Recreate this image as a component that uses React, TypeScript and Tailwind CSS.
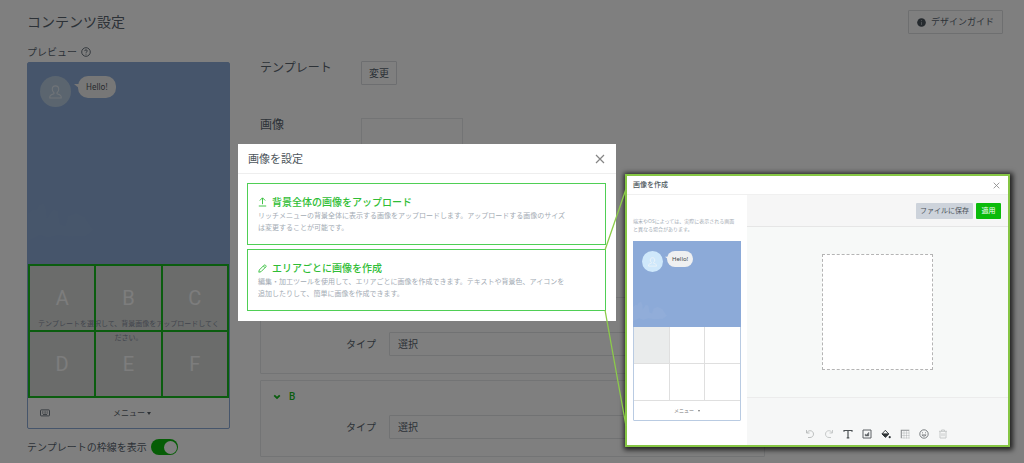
import React from "react";

const FONT = "font-['Noto_Sans','Noto_Sans_CJK_JP',sans-serif]";

function PersonIcon({ className }: { className: string }) {
  return (
    <svg viewBox="0 0 12 13" className={className} fill="none" stroke="currentColor" strokeWidth="1" strokeLinejoin="round" aria-hidden="true">
      <path d="M4.6 7.2C3.5 6.3 3 5.1 3 3.9 3 2 4.3.8 6 .8s3 1.200 3 3.100c0 1.200-.5 2.400-1.600 3.300v.9c1.700.5 3.100 1 3.600 2 .2.500.3 1.200.3 1.900H.7c0-.7.1-1.400.3-1.900.5-1 1.900-1.500 3.600-2z" />
    </svg>
  );
}

function CloudArt({ className }: { className: string }) {
  return (
    <svg viewBox="0 0 70 40" className={className} fill="currentColor" aria-hidden="true">
      <path d="M0 40V12l5-4 3 1 3-5 5-2 2 6 1 9 6-9 5 2 2 13 5 2 3-10 8-3 9 4 5 8 4 5-8 6-16 1-12-2-10 3-8-3z" />
    </svg>
  );
}

function CloseIcon({ className }: { className: string }) {
  return (
    <svg viewBox="0 0 10 10" className={className} fill="none" stroke="currentColor" strokeWidth="1.2" aria-hidden="true">
      <path d="M1 1l8 8M9 1L1 9" />
    </svg>
  );
}

function KeyboardIcon() {
  return (
    <svg viewBox="0 0 10 8" className="h-[8px] w-[10px] text-[#6f7982]" fill="none" stroke="currentColor" aria-hidden="true">
      <rect x=".5" y=".9" width="9" height="6" rx=".6" />
      <path d="M2 2.900h6M2 4.100h6" strokeDasharray="1 .6" strokeWidth=".8" />
      <path d="M3 5.500h4" strokeWidth=".9" />
    </svg>
  );
}

function Preview() {
  return (
    <div className="mt-1 rounded-[2px] border border-[#8caad6]">
      <div className="relative flex h-[201px] items-start gap-[7px] overflow-hidden bg-[#8caad6] pt-[13px] pl-[12px]">
        <CloudArt className="absolute bottom-[23px] left-0 h-[40px] w-[70px] text-[#8eacd7]" />
        <div className="flex size-[31px] items-center justify-center rounded-full bg-[#b6cbdf] text-[#dfe7ef]">
          <PersonIcon className="h-[14px] w-[13px]" />
        </div>
        <div className="relative rounded-[10px] bg-[#eeeeee] px-[8px] text-[8px] leading-[22px] text-[#4e5459]">
          <svg viewBox="0 0 6 6" className="absolute top-[7px] -left-[4px] size-[6px]" fill="#eeeeee" aria-hidden="true">
            <path d="M0 1h6v5z" />
          </svg>
          Hello!
        </div>
      </div>
      <div className="relative bg-[#d6d9d7]">
        <p className="absolute inset-x-0 top-[53px] text-center text-[7px] leading-[14px] text-[#858b9b]">
          テンプレートを選択して、背景画像をアップロードしてく
          <br />
          ださい。
        </p>
        <div className="relative grid grid-cols-3 border border-[#16bb1e]">
          {["A", "B", "C", "D", "E", "F"].map((k) => (
            <div key={k} className="flex h-[66px] items-center justify-center border border-[#16bb1e] font-[Roboto,sans-serif] text-[20px] text-[#fafafa]">
              {k}
            </div>
          ))}
        </div>
      </div>
      <div className="grid h-[30px] grid-cols-3 items-center pl-[12px]">
        <KeyboardIcon />
        <div className="flex items-center gap-[2px] text-[8px] leading-[12px] text-[#5a6168] whitespace-nowrap">
          <span className="pl-[10px]">メニュー</span>
          <span className="border-x-2 border-t-[3px] border-x-transparent border-t-current" />
        </div>
      </div>
    </div>
  );
}

function TypeRow({ id }: { id: string }) {
  return (
    <div className="mt-3 flex items-center gap-[13px] pr-3">
      <label htmlFor={id} className="w-[115px] text-right">
        タイプ
      </label>
      <select id={id} className="h-6 flex-1 appearance-none rounded-[1px] border border-[#e2e4e6] bg-transparent px-2 text-[10px]">
        <option>選択</option>
      </select>
    </div>
  );
}

function AreaCard({ name }: { name: string }) {
  return (
    <section className="rounded-[1px] border border-[#e6e8ea] pt-[10px] pb-[17px] text-[10px] leading-3">
      <h3 className="flex items-center gap-2 pl-3 font-[Roboto,'Noto_Sans_CJK_JP',sans-serif] font-medium text-[#16bb1e]">
        <svg viewBox="0 0 8 6" className="h-[6px] w-[8px]" fill="none" stroke="currentColor" strokeWidth="1.800" aria-hidden="true">
          <path d="M1.200 1.300L4 4l2.800-2.700" />
        </svg>
        {name}
      </h3>
      <TypeRow id={`type-${name}`} />
    </section>
  );
}

function SettingsPage() {
  return (
    <div className="pb-1 text-[#5a656f]">
      <header className="flex items-center justify-between pt-[10px] pr-[21px] pl-[27px]">
        <h1 className="text-[14px] leading-6">コンテンツ設定</h1>
        <button type="button" className="flex h-6 items-center gap-[5px] rounded-[1px] border border-[#dcdee1] px-[8px] text-[9px]">
          <svg viewBox="0 0 10 10" className="size-[9px]" aria-hidden="true">
            <circle cx="5" cy="5" r="4.800" fill="#4b545d" />
            <path d="M5 2.300v1.200M5 4.500v3.200" stroke="#a5abb0" strokeWidth="1" />
          </svg>
          デザインガイド
        </button>
      </header>
      <div className="flex gap-[30px] pl-[27px]">
        <div className="w-[203px] shrink-0 pt-3">
          <h2 className="flex items-center gap-[4px] text-[10px] leading-3">
            プレビュー
            <svg viewBox="0 0 10 10" className="size-[10px]" fill="none" stroke="currentColor" strokeWidth=".9" aria-hidden="true">
              <circle cx="5" cy="5" r="4.300" />
              <path d="M3.700 4.100c0-.8.6-1.300 1.300-1.300s1.300.5 1.300 1.200c0 .9-1.300.9-1.300 1.800M5 6.700v.9" />
            </svg>
          </h2>
          <Preview />
          <label className="mt-[10px] flex h-4 items-center gap-[4px] text-[10px]">
            テンプレートの枠線を表示
            <input type="checkbox" defaultChecked className="peer sr-only" />
            <span className="flex h-4 w-[27px] items-center justify-end rounded-full bg-[#0dbb0d] px-[1px]">
              <span className="size-[13px] rounded-full bg-white" />
            </span>
          </label>
        </div>
        <div className="max-w-[505px] flex-1 pt-[27px]">
          <div className="flex items-start">
            <h2 className="w-[101px] text-[12px] leading-[14px]">テンプレート</h2>
            <button type="button" className="h-6 rounded-[1px] border border-[#dadce0] px-[7px] text-[10px]">
              変更
            </button>
          </div>
          <div className="mt-[33px] flex items-start">
            <h2 className="w-[101px] text-[12px] leading-[14px]">画像</h2>
            <div className="h-[116px] w-[102px] border border-[#e6e8ea]" />
          </div>
          <div className="mt-[63px] flex flex-col gap-[6px]">
            <AreaCard name="A" />
            <AreaCard name="B" />
          </div>
        </div>
      </div>
    </div>
  );
}

function OptionButton({ icon, title, children }: { icon: React.ReactNode; title: string; children: React.ReactNode }) {
  return (
    <button type="button" className="block w-full border border-[#4fcf55] px-[10px] py-[10px] text-left">
      <span className="flex items-center gap-[5px] text-[10px] leading-4 font-medium text-[#2fbd35]">
        {icon}
        {title}
      </span>
      <span className="block text-[7px] leading-3 text-[#a3abb4]">{children}</span>
    </button>
  );
}

function ImageDialog() {
  return (
    <section role="dialog" aria-labelledby="image-title" className="absolute top-[144px] left-[238px] w-[378px] bg-white pb-[10px]">
      <header className="flex h-[30px] items-center justify-between border-b border-[#eeeeee] pr-[11px] pl-[10px]">
        <h2 id="image-title" className="text-[11px] leading-4 text-[#4d565c]">
          画像を設定
        </h2>
        <button type="button" aria-label="閉じる" className="text-[#858585]">
          <CloseIcon className="size-[10px]" />
        </button>
      </header>
      <div className="flex flex-col gap-[4px] px-[9px] pt-[9px] pr-[10px]">
        <OptionButton
          title="背景全体の画像をアップロード"
          icon={
            <svg viewBox="0 0 9 10" className="h-[10px] w-[9px]" fill="none" stroke="currentColor" strokeWidth=".9" aria-hidden="true">
              <path d="M4.500 7.200V1M1.800 3.500l2.700-2.700 2.700 2.700M.8 9h7.400" />
            </svg>
          }
        >
          リッチメニューの背景全体に表示する画像をアップロードします。アップロードする画像のサイズ
          <br />
          は変更することが可能です。
        </OptionButton>
        <OptionButton
          title="エリアごとに画像を作成"
          icon={
            <svg viewBox="0 0 10 10" className="size-[9px]" fill="none" stroke="currentColor" strokeWidth="1" strokeLinejoin="round" aria-hidden="true">
              <path d="M.9 9.100l.5-2.400 5.400-5.400c.4-.4 1-.4 1.400 0l.5.5c.4.4.4 1 0 1.400L3.300 8.600zM5.900 2.200l1.900 1.900" />
            </svg>
          }
        >
          編集・加工ツールを使用して、エリアごとに画像を作成できます。テキストや背景色、アイコンを
          <br />
          追加したりして、簡単に画像を作成できます。
        </OptionButton>
      </div>
    </section>
  );
}

const TOOLS: { label: string; tone: string; art: React.ReactNode }[] = [
  {
    label: "元に戻す",
    tone: "text-[#bcbfbf]",
    art: <path d="M1.500 1v3h3M1.700 4C2.500 2.400 3.800 1.700 5.100 1.700c2 0 3.400 1.500 3.400 3.400S7.100 8.500 5 8.500H3" />,
  },
  {
    label: "やり直す",
    tone: "text-[#c6c9c9]",
    art: <path d="M8.500 1v3h-3M8.300 4C7.500 2.400 6.200 1.700 4.900 1.700c-2 0-3.400 1.500-3.400 3.400S2.900 8.500 5 8.500h2" />,
  },
  {
    label: "テキスト",
    tone: "text-[#4c5154]",
    art: <path d="M1 2.800V1.500h8v1.300M5 1.500v7.200M3.700 8.800h2.600" strokeWidth="1.200" />,
  },
  {
    label: "画像",
    tone: "text-[#5c6164]",
    art: (
      <>
        <path d="M1 1h8v8H1z" />
        <path d="M3.200 6.900V5l1.200.9L6.800 3.300v3.600z" fill="currentColor" strokeWidth=".5" />
      </>
    ),
  },
  {
    label: "背景色",
    tone: "text-[#2e3336]",
    art: (
      <>
        <path d="M4.300 1.300L7.700 4.900 4.300 8.200 1 4.900z" strokeWidth=".9" />
        <path d="M1 4.900h6.700L4.300 8.200z" fill="currentColor" />
        <circle cx="8.700" cy="8.200" r="1.100" fill="currentColor" stroke="none" />
      </>
    ),
  },
  {
    label: "枠線",
    tone: "text-[#8b8f91]",
    art: (
      <>
        <path d="M1.300 9.200V1.200h8" strokeWidth="1.100" />
        <path d="M4 2v7.500M6.500 2v7.500M9 2v7.500M2 4h7.500M2 6.500h7.500M2 9h7.500" strokeWidth=".3" />
      </>
    ),
  },
  {
    label: "アイコン",
    tone: "text-[#5c6164]",
    art: (
      <>
        <circle cx="5" cy="5" r="4.200" strokeWidth=".8" />
        <path d="M3.500 3.300v1M6.500 3.300v1M2.900 5.900c.9 1.700 3.300 1.700 4.200 0z" strokeWidth=".7" />
      </>
    ),
  },
  {
    label: "削除",
    tone: "text-[#c6c9c9]",
    art: <path d="M1 2.300h8M3.500 2.300V1h3v1.300M2 2.300V9h6V2.300M4 4.200v3M6 4.200v3" />,
  },
];

function EditorPreview() {
  return (
    <div className="mt-2 rounded-[1px] border border-[#b9cbe2]">
      <div className="relative -mx-px -mt-px flex h-[86px] items-start gap-[4px] overflow-hidden bg-[#8caad8] pt-[10px] pl-[9px]">
        <CloudArt className="absolute bottom-[5px] left-0 h-[22px] w-[36px] text-[#91add9]" />
        <div className="flex size-[21px] items-center justify-center rounded-full bg-[#cfe8fb] text-[#f2f6f8]">
          <PersonIcon className="h-[10px] w-[9px]" />
        </div>
        <div className="relative rounded-[8px] bg-[#eff0f1] px-[5px] text-[6px] leading-[16px] text-[#41474b]">
          <svg viewBox="0 0 6 6" className="absolute top-[5px] -left-[2px] size-[4px]" fill="#eff0f1" aria-hidden="true">
            <path d="M0 1h6v5z" />
          </svg>
          Hello!
        </div>
      </div>
      <div className="grid grid-cols-3 gap-px border-b border-[#dfdfdf] bg-[#dfdfdf]">
        <div className="h-[36px] bg-[#eaecec]" />
        <div className="bg-white" />
        <div className="bg-white" />
        <div className="h-[36px] bg-white" />
        <div className="bg-white" />
        <div className="bg-white" />
      </div>
      <div className="flex h-[19px] items-center justify-center gap-[4px] text-[5px] text-[#777777]">
        メニュー
        <span className="border-x border-t-2 border-x-transparent border-t-current" />
      </div>
    </div>
  );
}

function EditorDialog() {
  return (
    <section
      role="dialog"
      aria-labelledby="editor-title"
      className="absolute top-[174px] left-[625px] flex w-[385px] flex-col border-2 border-[#86c644] bg-white shadow-[1px_1px_5px_2px_rgba(0,0,0,0.75)]"
    >
      <header className="flex h-[19px] items-center justify-between border-b border-[#f0f0f0] pr-[8px] pl-[6px]">
        <h2 id="editor-title" className="text-[7px] leading-3 font-medium text-[#4d565c]">
          画像を作成
        </h2>
        <button type="button" aria-label="閉じる" className="text-[#8a8a8a]">
          <CloseIcon className="size-[7px]" />
        </button>
      </header>
      <div className="flex">
        <div className="w-[120px] shrink-0 px-[6px] pt-[22px] pb-[24px]">
          <p className="text-[5px] leading-[8px] whitespace-nowrap text-[#a3abb4]">
            端末やOSによっては、実際に表示される画面
            <br />
            と異なる場合があります。
          </p>
          <EditorPreview />
        </div>
        <div className="flex flex-1 flex-col bg-[#f7f9f8]">
          <div className="flex h-[32px] items-center justify-end gap-[3px] border-b border-[#e6e6e6] bg-[#f6f6f6] pr-[7px]">
            <button type="button" className="h-4 w-[57px] rounded-[1px] bg-[#cdd3db] text-[7px] leading-4 text-[#4a5258]">
              ファイルに保存
            </button>
            <button type="button" className="h-4 w-[25px] rounded-[1px] bg-[#0bbb0b] text-[7px] leading-4 text-white">
              適用
            </button>
          </div>
          <div className="flex flex-1 items-center justify-center">
            <div className="h-[116px] w-[111px] border border-dashed border-[#b4b4b4] bg-white" />
          </div>
          <div className="flex h-[48px] items-end justify-center gap-[9px] border-t border-[#ececec] bg-[#f6f7f7] pr-[2px] pb-[6px]">
            {TOOLS.map((t) => (
              <button key={t.label} type="button" aria-label={t.label} className={t.tone}>
                <svg viewBox="0 0 10 10" className="block size-[10px]" fill="none" stroke="currentColor" strokeWidth="1" aria-hidden="true">
                  {t.art}
                </svg>
              </button>
            ))}
          </div>
        </div>
      </div>
    </section>
  );
}

export default function App() {
  return (
    <div lang="ja" className={`relative min-h-screen overflow-hidden bg-white ${FONT}`}>
      <SettingsPage />
      <div className="absolute inset-0 bg-black/50" />
      <ImageDialog />
      <EditorDialog />
      <svg viewBox="0 0 24 240" className="absolute top-[188px] left-[604px] h-[240px] w-[24px]" fill="none" stroke="#8ccb4a" strokeWidth="1.300" aria-hidden="true">
        <path d="M1 62L22 1M1 122L22 238" />
      </svg>
    </div>
  );
}
